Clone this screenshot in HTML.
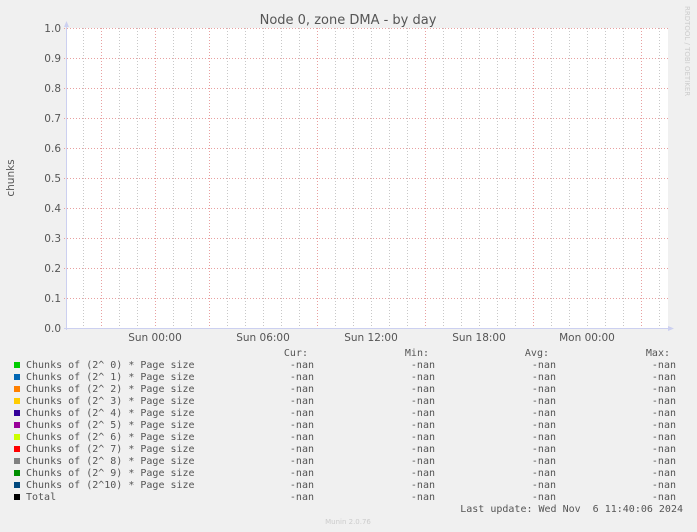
<!DOCTYPE html><html><head><meta charset="utf-8"><style>html,body{margin:0;padding:0;background:#f0f0f0}svg{display:block}</style></head><body>
<svg width="697" height="532" xmlns="http://www.w3.org/2000/svg" font-family="DejaVu Sans, Liberation Sans, sans-serif">
<rect width="697" height="532" fill="#f0f0f0"/>
<rect x="67" y="28" width="601" height="300" fill="#fff"/>
<g stroke="#c8c8c8" stroke-dasharray="1,2" stroke-width="1">
<line x1="83.5" y1="28" x2="83.5" y2="328"/><line x1="119.5" y1="28" x2="119.5" y2="328"/><line x1="137.5" y1="28" x2="137.5" y2="328"/><line x1="173.5" y1="28" x2="173.5" y2="328"/><line x1="191.5" y1="28" x2="191.5" y2="328"/><line x1="227.5" y1="28" x2="227.5" y2="328"/><line x1="245.5" y1="28" x2="245.5" y2="328"/><line x1="263.5" y1="28" x2="263.5" y2="328"/><line x1="281.5" y1="28" x2="281.5" y2="328"/><line x1="299.5" y1="28" x2="299.5" y2="328"/><line x1="335.5" y1="28" x2="335.5" y2="328"/><line x1="353.5" y1="28" x2="353.5" y2="328"/><line x1="371.5" y1="28" x2="371.5" y2="328"/><line x1="389.5" y1="28" x2="389.5" y2="328"/><line x1="407.5" y1="28" x2="407.5" y2="328"/><line x1="443.5" y1="28" x2="443.5" y2="328"/><line x1="461.5" y1="28" x2="461.5" y2="328"/><line x1="479.5" y1="28" x2="479.5" y2="328"/><line x1="497.5" y1="28" x2="497.5" y2="328"/><line x1="515.5" y1="28" x2="515.5" y2="328"/><line x1="551.5" y1="28" x2="551.5" y2="328"/><line x1="569.5" y1="28" x2="569.5" y2="328"/><line x1="587.5" y1="28" x2="587.5" y2="328"/><line x1="605.5" y1="28" x2="605.5" y2="328"/><line x1="623.5" y1="28" x2="623.5" y2="328"/><line x1="659.5" y1="28" x2="659.5" y2="328"/>
</g>
<g stroke="#e8a0a0" stroke-dasharray="1,2" stroke-width="1">
<line x1="101.5" y1="28" x2="101.5" y2="328"/><line x1="155.5" y1="28" x2="155.5" y2="328"/><line x1="209.5" y1="28" x2="209.5" y2="328"/><line x1="317.5" y1="28" x2="317.5" y2="328"/><line x1="425.5" y1="28" x2="425.5" y2="328"/><line x1="533.5" y1="28" x2="533.5" y2="328"/><line x1="641.5" y1="28" x2="641.5" y2="328"/>
<line x1="64" y1="28.5" x2="670" y2="28.5"/><line x1="64" y1="58.5" x2="670" y2="58.5"/><line x1="64" y1="88.5" x2="670" y2="88.5"/><line x1="64" y1="118.5" x2="670" y2="118.5"/><line x1="64" y1="148.5" x2="670" y2="148.5"/><line x1="64" y1="178.5" x2="670" y2="178.5"/><line x1="64" y1="208.5" x2="670" y2="208.5"/><line x1="64" y1="238.5" x2="670" y2="238.5"/><line x1="64" y1="268.5" x2="670" y2="268.5"/><line x1="64" y1="298.5" x2="670" y2="298.5"/>
</g>
<line x1="66.5" y1="26" x2="66.5" y2="330" stroke="#ccd0f0"/>
<line x1="64" y1="328.5" x2="672" y2="328.5" stroke="#ccd0f0"/>
<polygon points="64,27 69,27 66.5,21" fill="#ccd0f0"/>
<polygon points="668,326 668,331 674,328.5" fill="#ccd0f0"/>
<text x="348" y="24" font-size="13" fill="#555" text-anchor="middle">Node 0, zone DMA - by day</text>
<g font-size="10.5" fill="#555" text-anchor="end">
<text x="61" y="32">1.0</text><text x="61" y="62">0.9</text><text x="61" y="92">0.8</text><text x="61" y="122">0.7</text><text x="61" y="152">0.6</text><text x="61" y="182">0.5</text><text x="61" y="212">0.4</text><text x="61" y="242">0.3</text><text x="61" y="272">0.2</text><text x="61" y="302">0.1</text><text x="61" y="332">0.0</text>
</g>
<text transform="translate(14,178) rotate(-90)" font-size="10.5" fill="#555" text-anchor="middle">chunks</text>
<g font-size="10.5" fill="#555" text-anchor="middle">
<text x="155" y="341">Sun 00:00</text><text x="263" y="341">Sun 06:00</text><text x="371" y="341">Sun 12:00</text><text x="479" y="341">Sun 18:00</text><text x="587" y="341">Mon 00:00</text>
</g>
<text transform="translate(685,6) rotate(90)" font-size="7" fill="#ccc">RRDTOOL / TOBI OETIKER</text>
<g font-family="DejaVu Sans Mono, Liberation Mono, monospace" font-size="10" fill="#555">
<g text-anchor="end"><text x="308" y="356">Cur:</text><text x="429" y="356">Min:</text><text x="549" y="356">Avg:</text><text x="670" y="356">Max:</text></g>
<rect x="14" y="362" width="6" height="6" fill="#00cc00"/><rect x="14" y="374" width="6" height="6" fill="#0066b3"/><rect x="14" y="386" width="6" height="6" fill="#ff8000"/><rect x="14" y="398" width="6" height="6" fill="#ffcc00"/><rect x="14" y="410" width="6" height="6" fill="#330099"/><rect x="14" y="422" width="6" height="6" fill="#990099"/><rect x="14" y="434" width="6" height="6" fill="#ccff00"/><rect x="14" y="446" width="6" height="6" fill="#ff0000"/><rect x="14" y="458" width="6" height="6" fill="#808080"/><rect x="14" y="470" width="6" height="6" fill="#008f00"/><rect x="14" y="482" width="6" height="6" fill="#00487d"/><rect x="14" y="494" width="6" height="6" fill="#000"/>
<text x="26" y="368" xml:space="preserve">Chunks of (2^ 0) * Page size</text>
<text x="26" y="380" xml:space="preserve">Chunks of (2^ 1) * Page size</text>
<text x="26" y="392" xml:space="preserve">Chunks of (2^ 2) * Page size</text>
<text x="26" y="404" xml:space="preserve">Chunks of (2^ 3) * Page size</text>
<text x="26" y="416" xml:space="preserve">Chunks of (2^ 4) * Page size</text>
<text x="26" y="428" xml:space="preserve">Chunks of (2^ 5) * Page size</text>
<text x="26" y="440" xml:space="preserve">Chunks of (2^ 6) * Page size</text>
<text x="26" y="452" xml:space="preserve">Chunks of (2^ 7) * Page size</text>
<text x="26" y="464" xml:space="preserve">Chunks of (2^ 8) * Page size</text>
<text x="26" y="476" xml:space="preserve">Chunks of (2^ 9) * Page size</text>
<text x="26" y="488" xml:space="preserve">Chunks of (2^10) * Page size</text>
<text x="26" y="500">Total</text>
<g text-anchor="end">
<text x="314" y="368">-nan</text><text x="435" y="368">-nan</text><text x="556" y="368">-nan</text><text x="676" y="368">-nan</text>
<text x="314" y="380">-nan</text><text x="435" y="380">-nan</text><text x="556" y="380">-nan</text><text x="676" y="380">-nan</text>
<text x="314" y="392">-nan</text><text x="435" y="392">-nan</text><text x="556" y="392">-nan</text><text x="676" y="392">-nan</text>
<text x="314" y="404">-nan</text><text x="435" y="404">-nan</text><text x="556" y="404">-nan</text><text x="676" y="404">-nan</text>
<text x="314" y="416">-nan</text><text x="435" y="416">-nan</text><text x="556" y="416">-nan</text><text x="676" y="416">-nan</text>
<text x="314" y="428">-nan</text><text x="435" y="428">-nan</text><text x="556" y="428">-nan</text><text x="676" y="428">-nan</text>
<text x="314" y="440">-nan</text><text x="435" y="440">-nan</text><text x="556" y="440">-nan</text><text x="676" y="440">-nan</text>
<text x="314" y="452">-nan</text><text x="435" y="452">-nan</text><text x="556" y="452">-nan</text><text x="676" y="452">-nan</text>
<text x="314" y="464">-nan</text><text x="435" y="464">-nan</text><text x="556" y="464">-nan</text><text x="676" y="464">-nan</text>
<text x="314" y="476">-nan</text><text x="435" y="476">-nan</text><text x="556" y="476">-nan</text><text x="676" y="476">-nan</text>
<text x="314" y="488">-nan</text><text x="435" y="488">-nan</text><text x="556" y="488">-nan</text><text x="676" y="488">-nan</text>
<text x="314" y="500">-nan</text><text x="435" y="500">-nan</text><text x="556" y="500">-nan</text><text x="676" y="500">-nan</text>
<text x="683" y="512" xml:space="preserve">Last update: Wed Nov  6 11:40:06 2024</text>
</g>
</g>
<text x="348" y="524" font-size="7" fill="#ccc" text-anchor="middle">Munin 2.0.76</text>
</svg>
</body></html>
